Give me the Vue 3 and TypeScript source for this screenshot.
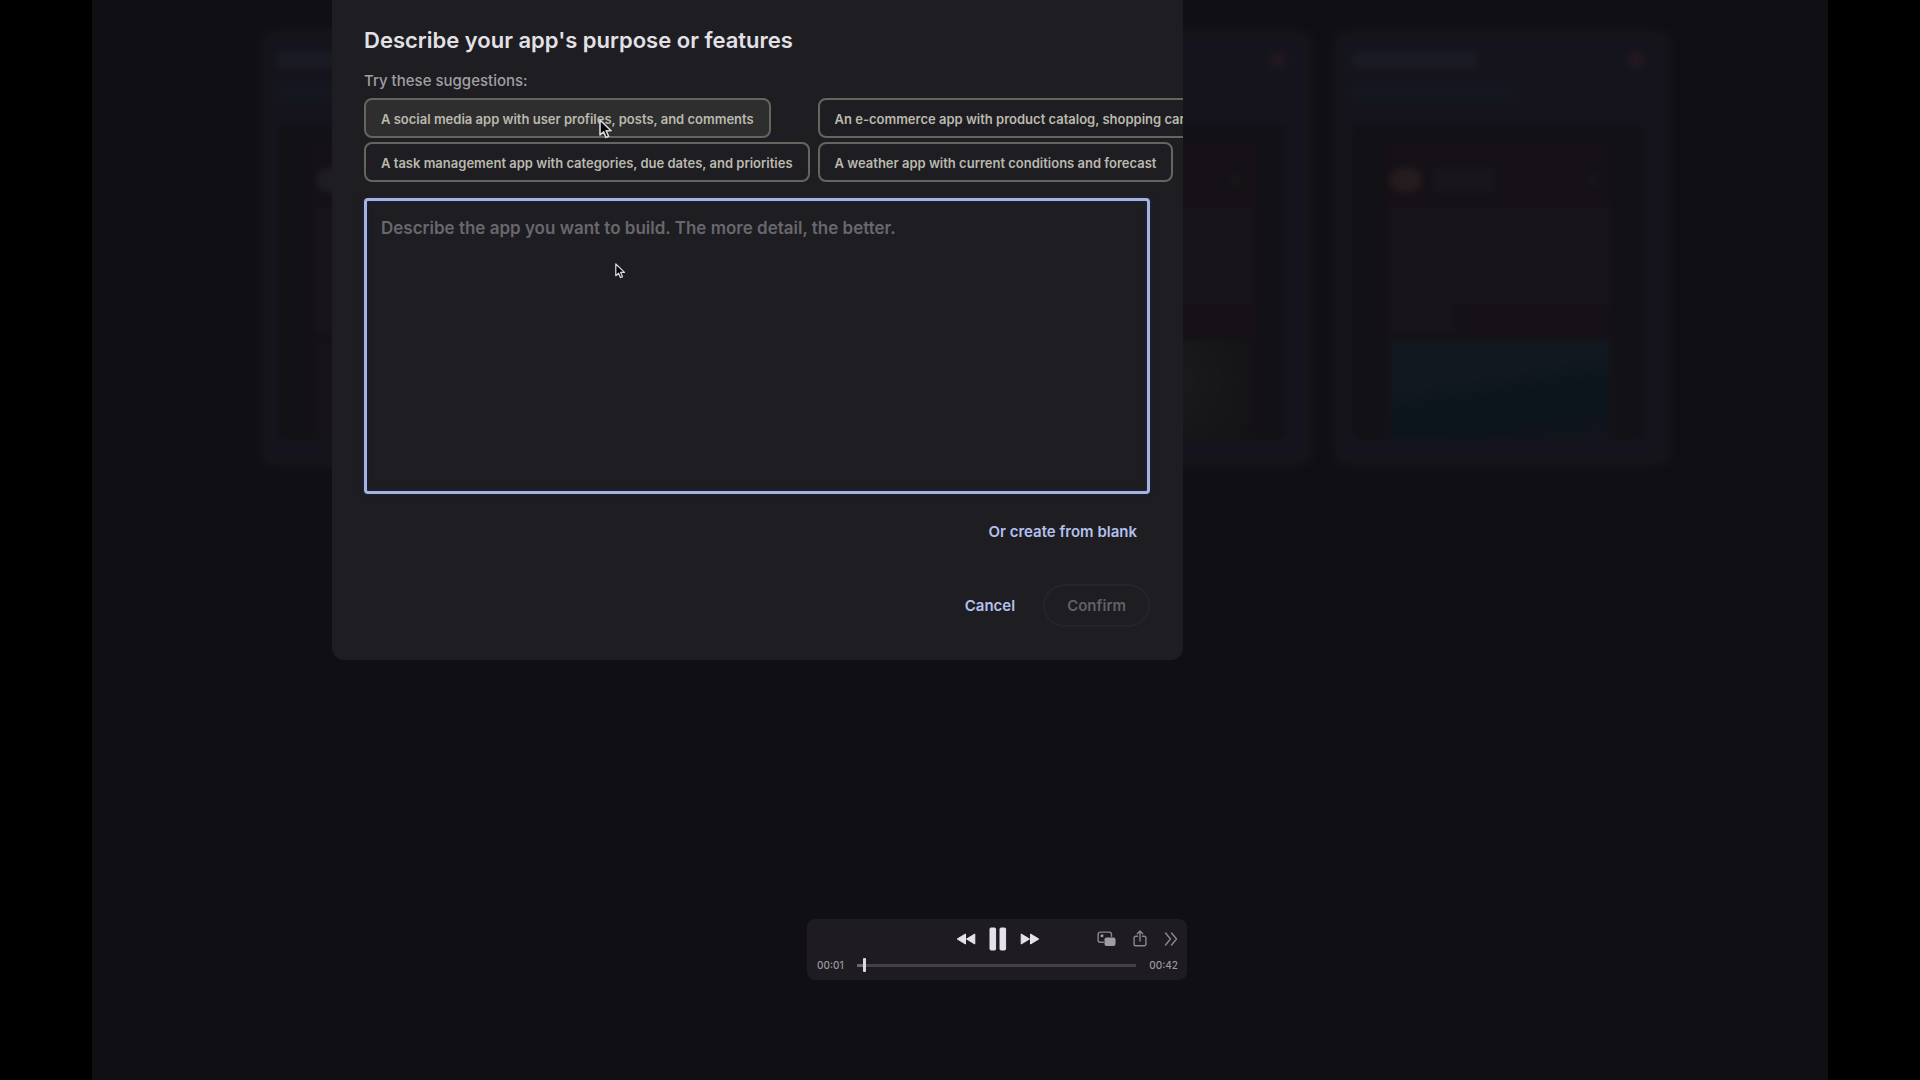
<script setup lang="ts">
import { ref } from 'vue'

const suggestions: { text: string; active: boolean }[] = [
  { text: 'A social media app with user profiles, posts, and comments', active: true },
  { text: 'An e-commerce app with product catalog, shopping cart, and checkout', active: false },
  { text: 'A task management app with categories, due dates, and priorities', active: false },
  { text: 'A weather app with current conditions and forecast', active: false },
]

const description = ref('')
const position = ref(1)
const duration = 42
const cards = ['sand', 'plain', 'leaf', 'sea']

const clock = (s: number): string =>
  `${String(Math.floor(s / 60)).padStart(2, '0')}:${String(s % 60).padStart(2, '0')}`
</script>

<template>
  <div class="screen">
    <main class="stage">
      <div class="backdrop" aria-hidden="true">
        <div v-for="card in cards" :key="card" class="card" :class="card">
          <div class="card-head">
            <div class="card-lines"><i class="line-a"></i><i class="line-b"></i></div>
            <i class="dot"></i>
          </div>
          <div class="preview">
            <div class="phone">
              <div class="profile"><i class="avatar"></i><i class="name"></i><i class="more"></i></div>
              <div class="copy"></div>
              <div class="copy-end"></div>
              <div class="photo"></div>
            </div>
          </div>
        </div>
      </div>

      <section class="dialog" role="dialog" aria-labelledby="dialog-title">
        <h1 id="dialog-title">Describe your app's purpose or features</h1>
        <p class="hint">Try these suggestions:</p>
        <div class="chips">
          <button
            v-for="item in suggestions"
            :key="item.text"
            type="button"
            class="chip"
            :class="{ active: item.active }"
            @click="description = item.text"
          >{{ item.text }}</button>
        </div>
        <textarea
          v-model="description"
          aria-labelledby="dialog-title"
          placeholder="Describe the app you want to build. The more detail, the better."
        ></textarea>
        <div class="blank-row">
          <button type="button" class="text-button">Or create from blank</button>
        </div>
        <div class="actions">
          <button type="button" class="text-button">Cancel</button>
          <button type="button" class="confirm" disabled>Confirm</button>
        </div>

        <svg class="cursor cursor-large" viewBox="0 0 14 20" aria-hidden="true">
          <path d="M1 1v15l3.6-3.2 2.3 5.6 2.7-1.1-2.4-5.5h4.9z" />
        </svg>
        <svg class="cursor cursor-small" viewBox="0 0 14 20" aria-hidden="true">
          <path d="M1 1v15l3.6-3.2 2.3 5.6 2.7-1.1-2.4-5.5h4.9z" />
        </svg>
      </section>

      <div class="player">
        <div class="controls">
          <div class="transport">
            <button type="button" aria-label="Rewind">
              <svg width="20" height="14" viewBox="0 0 20 14"><path class="solid" d="M9.5 2v10L1.2 7zM18.8 2v10L10.5 7z" /></svg>
            </button>
            <button type="button" aria-label="Pause">
              <svg width="18" height="24" viewBox="0 0 18 24"><rect class="solid" x="1" y="1" width="5.6" height="22" rx="1" /><rect class="solid" x="11" y="1" width="5.6" height="22" rx="1" /></svg>
            </button>
            <button type="button" aria-label="Fast forward">
              <svg width="20" height="14" viewBox="0 0 20 14"><path class="solid" d="M1.2 2v10L9.5 7zM10.5 2v10L18.8 7z" /></svg>
            </button>
          </div>
          <div class="extras">
            <button type="button" aria-label="Picture in picture">
              <svg width="19" height="16" viewBox="0 0 19 16">
                <path class="stroke" d="M6.500 11.200H3.300a2.200 2.200 0 0 1-2.200-2.200V3.300a2.200 2.200 0 0 1 2.200-2.200h9a2.200 2.200 0 0 1 2.200 2.200v2" />
                <circle class="grey" cx="5" cy="4.800" r="1.500" />
                <rect class="grey" x="7.500" y="6.500" width="11" height="8.500" rx="2" />
              </svg>
            </button>
            <button type="button" aria-label="Share">
              <svg width="14" height="17" viewBox="0 0 14 17">
                <path class="stroke" d="M4.500 6.200H2.600A1.500 1.500 0 0 0 1.100 7.700v6.600a1.500 1.500 0 0 0 1.500 1.500h8.800a1.500 1.500 0 0 0 1.500-1.500V7.700a1.500 1.500 0 0 0-1.500-1.500H9.500M7 11V1.200M4.300 3.700 7 1l2.700 2.700" />
              </svg>
            </button>
            <button type="button" aria-label="More controls">
              <svg width="14" height="14" viewBox="0 0 14 14"><path class="stroke" d="m1.500 1 5 6-5 6M7.500 1l5 6-5 6" /></svg>
            </button>
          </div>
        </div>
        <div class="timeline">
          <span>{{ clock(position) }}</span>
          <input v-model.number="position" type="range" min="0" :max="duration" aria-label="Playback position" />
          <span>{{ clock(duration) }}</span>
        </div>
      </div>
    </main>
  </div>
</template>

<style>
body { margin: 0; background: #000; }
</style>

<style scoped>
* { box-sizing: border-box; }
.screen {
  min-height: 100vh;
  padding: 0 92px;
  background: #000;
  font-family: Inter, "Liberation Sans", sans-serif;
}
.stage {
  position: relative;
  min-height: 100vh;
  display: grid;
  grid-template-columns: 240fr 851fr 645fr;
  align-items: start;
  background: #0f0f14;
}
button { margin: 0; padding: 0; border: 0; background: none; font: inherit; }

/* dimmed project cards behind the dialog */
.backdrop {
  position: absolute;
  inset: 28px 156px auto 166px;
  display: grid;
  grid-template-columns: repeat(4, 1fr);
  gap: 18px;
  filter: blur(3px);
}
.card {
  height: 440px;
  padding: 16px 20px 20px 12px;
  border: 8px solid #141418;
  border-radius: 16px;
  background: #15141c;
  display: flex;
  flex-direction: column;
}
.card-head { display: flex; justify-content: space-between; height: 72px; }
.card-lines { display: flex; flex-direction: column; gap: 16px; }
.card-lines i { display: block; height: 16px; border-radius: 4px; }
.line-a { width: 124px; background: #191b24; }
.line-b { width: 164px; background: #14171f; }
.dot { width: 16px; height: 16px; border-radius: 8px; background: #23181f; }
.preview { flex: 1; padding: 16px 28px 0 32px; border-radius: 8px; background: #121116; overflow: hidden; }
.phone { height: 100%; padding: 24px 6px 0; background: #151116; display: flex; flex-direction: column; }
.profile { display: flex; align-items: center; gap: 12px; height: 32px; margin-bottom: 12px; }
.avatar { width: 32px; height: 24px; border-radius: 12px; background: #241b1e; }
.name { width: 60px; height: 24px; background: #19161b; }
.more { width: 10px; height: 12px; margin: 0 12px 0 auto; background: #17161a; }
.copy { height: 96px; background: #18151a; }
.copy-end { width: 64px; height: 28px; background: #18151a; }
.photo { flex: 1; margin-top: 8px; background: linear-gradient(170deg, #111820 0 38%, #0d151c 55% 75%, #13131d); }
.leaf .photo { background: radial-gradient(circle at 60% 40%, #1b1b1e, #131216 70%); }
.sand .avatar { background: #1e1d22; }
.sand .photo { background: #151318; }

.dialog {
  grid-column: 2;
  position: relative;
  height: 660px;
  padding: 24px 33px 32px 32px;
  border-radius: 0 0 12px 12px;
  background: #1e1d22;
  overflow: hidden;
}
h1 { margin: 0; color: #e2e1e6; font-size: 22px; line-height: 32px; font-weight: 600; white-space: nowrap; }
.hint { margin: 13px 0 5px; color: #a09fa4; font-size: 15px; line-height: 24px; font-weight: 500; }
.chips { display: grid; grid-template-columns: max-content max-content; justify-items: start; gap: 4px 8px; }
.chip {
  height: 40px;
  padding: 1px 15px 0;
  border: 2px solid #66645f;
  border-radius: 8px;
  color: #bbb9ae;
  font-size: 13px;
  font-weight: 600;
  white-space: nowrap;
}
.chip.active { background: #2e2e2f; }
textarea {
  display: block;
  width: 100%;
  height: 296px;
  margin-top: 16px;
  padding: 15px 14px;
  border: 3px solid #a4b3e0;
  border-radius: 4px;
  outline: 0;
  resize: none;
  background: #1e1d22;
  box-shadow: 0 0 4px #1a2440, inset 0 0 4px #1a2440;
  color: #e2e1e6;
  font-family: inherit;
  font-size: 17px;
  line-height: 24px;
  font-weight: 600;
}
textarea::placeholder { color: #68676d; opacity: 1; }
.blank-row { display: flex; justify-content: flex-end; padding-right: 13px; margin-top: 17px; }
.text-button { height: 40px; color: #b3c0ee; font-size: 15px; font-weight: 600; }
.actions { display: flex; justify-content: flex-end; align-items: center; gap: 28px; margin-top: 33px; }
.confirm {
  height: 43px;
  padding: 0 22px;
  border: 2px solid #252429;
  border-radius: 22px;
  color: #626066;
  font-size: 15px;
  font-weight: 600;
}
.cursor { position: absolute; fill: #050507; stroke: #d8d8dc; stroke-width: 1.6; stroke-linejoin: round; }
.cursor-large { left: 267px; top: 119px; width: 14px; height: 20px; }
.cursor-small { left: 283px; top: 263px; width: 11px; height: 16px; }

.player {
  position: absolute;
  left: calc(50% - 153px);
  bottom: 100px;
  width: 380px;
  height: 61px;
  padding: 6px 9px 0 10px;
  border-radius: 8px;
  background: #1e1b21;
}
.controls { display: grid; grid-template-columns: 1fr auto 1fr; align-items: center; height: 27px; }
.controls button { display: flex; }
.transport { grid-column: 2; display: flex; align-items: center; gap: 13px; }
.extras { display: flex; align-items: center; justify-content: flex-end; gap: 17px; }
.solid { fill: #e6e2ec; stroke: #e6e2ec; stroke-width: 1; stroke-linejoin: round; }
.stroke { fill: none; stroke: #8b888f; stroke-width: 1.4; stroke-linecap: round; stroke-linejoin: round; }
.grey { fill: #a09da5; }
.timeline { display: flex; align-items: center; gap: 13px; color: #9b989f; font-size: 10px; line-height: 26px; font-weight: 500; }
.timeline input {
  flex: 1;
  min-width: 0;
  height: 14px;
  margin: 0;
  appearance: none;
  background: linear-gradient(90deg, #6a686e 8px, #434147 8px) center / 100% 3px no-repeat;
}
.timeline input::-webkit-slider-thumb { appearance: none; width: 3px; height: 14px; border-radius: 1px; background: #dcdae0; }
</style>
